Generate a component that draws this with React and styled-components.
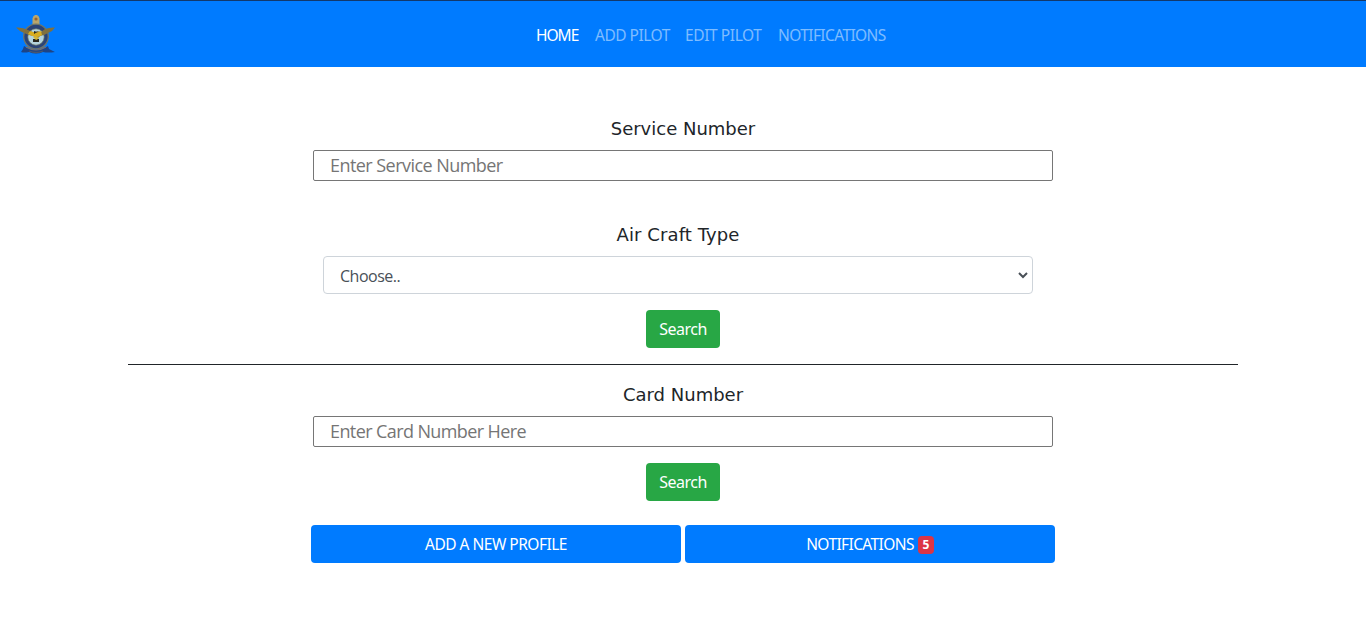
import React from "react";
import styled, { createGlobalStyle } from "styled-components";

const GlobalStyle = createGlobalStyle`
  *, *::before, *::after { box-sizing: border-box; }
  body {
    margin: 0;
    background: #fff;
    color: #212529;
    font: 400 16px/24px "Noto Sans", "Open Sans", sans-serif;
  }
`;

const Navbar = styled.nav`
  display: flex;
  align-items: center;
  height: 67px;
  padding: 0 16px;
  border-top: 1px solid #12386b;
  background: #007bff;
`;

const Brand = styled.a`
  display: block;
  width: 40px;
  height: 40px;
  margin-top: 2px;
  svg { display: block; }
`;

const NavList = styled.div`
  display: flex;
  gap: 16px;
  margin: 1px 0 0 480px;
`;

const NavLink = styled.a`
  width: ${(p) => p.$width}px;
  font: 400 15.5px/24px "Noto Sans", "Open Sans", sans-serif;
  letter-spacing: ${(p) => p.$spacing}px;
  white-space: nowrap;
  color: ${(p) => (p.$active ? "#fff" : "rgba(255, 255, 255, 0.5)")};
`;

const Page = styled.main`
  display: flex;
  flex-direction: column;
  align-items: center;
  padding-top: 51px;
`;

const Field = styled.div`
  display: flex;
  flex-direction: column;
  width: ${(p) => p.$width}px;
  margin: 0 ${(p) => p.$shift || 0}px ${(p) => p.$below}px 0;
`;

const Label = styled.label`
  height: 22px;
  margin-bottom: 10px;
  font: 400 18px/22px "DejaVu Sans", sans-serif;
  letter-spacing: ${(p) => p.$spacing || 0}px;
  text-align: center;
`;

const Input = styled.input`
  height: 31px;
  padding: 0 16px 2px;
  border: 1px solid #767676;
  border-radius: 2px;
  background: #fff;
  font: 400 18px/26px "Open Sans", sans-serif;
  letter-spacing: ${(p) => p.$spacing || 0}px;
  &::placeholder { color: #757575; opacity: 1; }
`;

const SelectBox = styled.div`
  display: flex;
  align-items: center;
  justify-content: space-between;
  height: 38px;
  padding: 2px 4px 0 16px;
  border: 1px solid #ced4da;
  border-radius: 4px;
  color: #495057;
  font: 400 16px/24px "Open Sans", sans-serif;
  letter-spacing: -0.5px;
  svg { display: block; margin-top: -3px; }
`;

const Button = styled.button`
  display: flex;
  align-items: center;
  justify-content: center;
  gap: 4px;
  width: ${(p) => p.$width}px;
  height: 38px;
  padding: 0;
  border: 0;
  border-radius: 4px;
  background: ${(p) => (p.$variant === "success" ? "#28a745" : "#007bff")};
  color: #fff;
  font: 400 ${(p) => p.$size || 15.5}px/24px "Noto Sans", "Open Sans", sans-serif;
  letter-spacing: ${(p) => p.$spacing || 0}px;
  white-space: nowrap;
`;

const Divider = styled.hr`
  width: 1110px;
  height: 1px;
  margin: 16px 0 19px;
  border: 0;
  background: #212529;
`;

const Actions = styled.div`
  display: flex;
  gap: 4px;
  margin-top: 24px;
`;

const Badge = styled.span`
  width: 16px;
  height: 18px;
  margin-top: 2px;
  border-radius: 4px;
  background: #dc3545;
  font: 700 12px/18px "Noto Sans", sans-serif;
  letter-spacing: 0;
  text-align: center;
`;

function Crest() {
  return (
    <svg width="40" height="40" viewBox="0 0 40 40" aria-hidden="true">
      <path d="M16.5 10V3.5Q17-.1 20-.1T23.5 3.5V10Z" fill="#b9a66c" />
      <circle cx="20" cy="4" r="1.6" fill="#98632f" />
      <path d="M8 31Q14 35 20 35T32 31L33 34 39 37Q32 38 27 37Q20 40 13 37Q8 38 5 37L7 34Z" fill="#1d4487" />
      <circle cx="20" cy="21.5" r="12.3" fill="#2b4477" stroke="#6f7668" strokeWidth="1.3" />
      <circle cx="20" cy="22" r="8.2" fill="#b5d4dd" stroke="#6c765f" strokeWidth=".7" />
      <path d="M0 12.5Q7 12 12 15L19 18 21 16 25 17 29 14Q34 12 39 12.5L36 16 32 18 28 20 24 21 22 23 17 21 13 20 8 18 4 16Z" fill="#80703e" />
      <path d="M14 16 20 18 25 16 26 20 22 22 16 21 12 19Z" fill="#d8ad20" />
      <path d="M18 16 21 17 18 19ZM17 24H23V27H17Z" fill="#29281f" />
      <path d="M17 22 20 21 23 23.5 20 25Z" fill="#d8b735" />
      <path d="M10 32Q20 38 30 32" fill="none" stroke="#7e6e63" strokeWidth="1.2" />
      <path d="M13 36Q20 39 27 36" fill="none" stroke="#4c576c" strokeWidth="1.3" />
    </svg>
  );
}

function Chevron() {
  return (
    <svg width="10" height="8" viewBox="0 0 10 8" aria-hidden="true">
      <path d="M1 2 5 6 9 2" fill="none" stroke="#495057" strokeWidth="2" />
    </svg>
  );
}

export default function App() {
  return (
    <>
      <GlobalStyle />
      <Navbar>
        <Brand><Crest /></Brand>
        <NavList>
          <NavLink $active $width={43} $spacing={-1}>HOME</NavLink>
          <NavLink $width={74} $spacing={-0.5}>ADD PILOT</NavLink>
          <NavLink $width={77} $spacing={-0.4}>EDIT PILOT</NavLink>
          <NavLink $width={108} $spacing={-0.6}>NOTIFICATIONS</NavLink>
        </NavList>
      </Navbar>
      <Page>
        <Field $width={740} $below={43}>
          <Label>Service Number</Label>
          <Input placeholder="Enter Service Number" $spacing={-0.55} />
        </Field>
        <Field $width={710} $below={16} $shift={10}>
          <Label $spacing={0.1}>Air Craft Type</Label>
          <SelectBox><span>Choose..</span><Chevron /></SelectBox>
        </Field>
        <Button $variant="success" $width={74} $size={16} $spacing={-0.5}>Search</Button>
        <Divider />
        <Field $width={740} $below={16}>
          <Label>Card Number</Label>
          <Input placeholder="Enter Card Number Here" $spacing={-0.6} />
        </Field>
        <Button $variant="success" $width={74} $size={16} $spacing={-0.5}>Search</Button>
        <Actions>
          <Button $width={370} $spacing={-0.5}>ADD A NEW PROFILE</Button>
          <Button $width={370} $spacing={-0.6}>NOTIFICATIONS <Badge>5</Badge></Button>
        </Actions>
      </Page>
    </>
  );
}
